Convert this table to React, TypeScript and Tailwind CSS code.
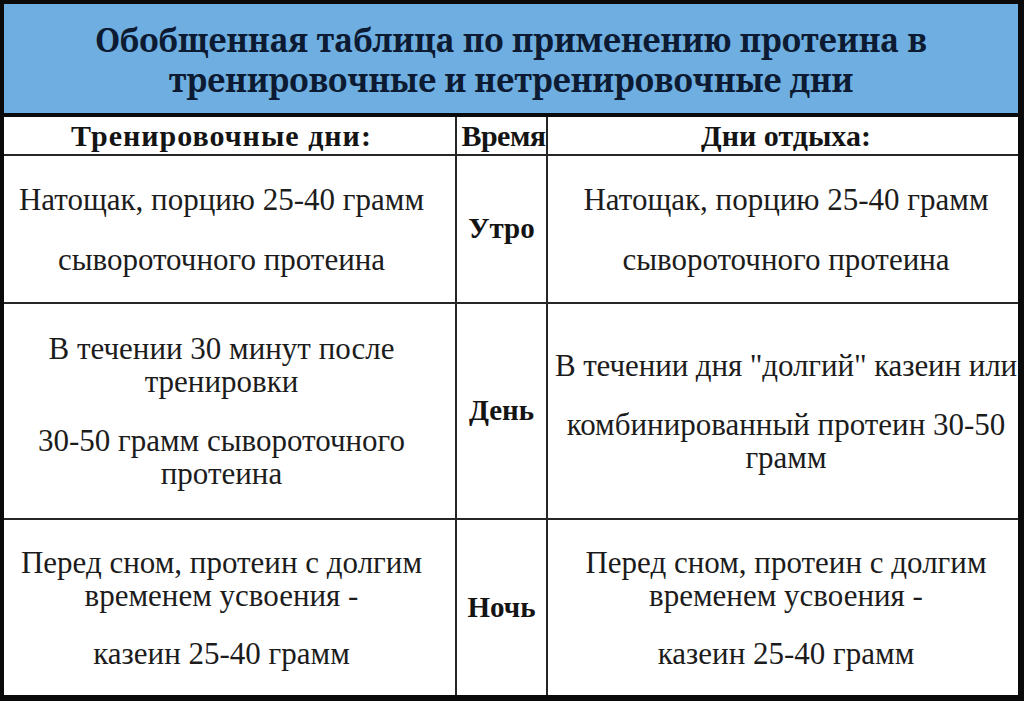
import React from "react";

const cellBody =
  "bg-white flex flex-col items-center justify-center text-center text-[31px] leading-[33px] whitespace-nowrap text-[#1c1c1c]";
const cellTime = "bg-white flex items-center justify-center font-bold text-[29px] text-[#141414]";
const cellHead =
  "bg-white flex items-center justify-center font-bold text-[30px] leading-[34px] whitespace-nowrap text-[#141414]";

export default function App() {
  return (
    <div className="w-[1024px] h-[701px] bg-[#0a0a0a] border-l-4 border-t-4 border-r-[6px] border-b-[6px] border-[#0a0a0a] flex flex-col overflow-hidden font-['Liberation_Serif']">
      <div className="h-[109px] bg-[#6eaee0] flex flex-col items-center justify-center text-[#0c1a32] font-bold text-[32px] leading-[40px] text-center pt-[2px] font-['Noto_Serif']">
        <div>Обобщенная таблица по применению протеина в</div>
        <div>тренировочные и нетренировочные дни</div>
      </div>
      <div className="h-[4px] bg-[#0a0a0a]" />
      <div className="flex-1 grid grid-cols-[451px_89px_470px] grid-rows-[37px_146px_214px_175px] gap-[2px] bg-[#262626]">
        <div className={cellHead + " pr-[16px] tracking-[1px]"}>Тренировочные дни:</div>
        <div className={cellHead + " tracking-[-0.5px] pl-[4px]"}>Время</div>
        <div className={cellHead + " pl-[6px]"}>Дни отдыха:</div>

        <div className={cellBody + " gap-[27px] pr-[16px]"}>
          <p>Натощак, порцию 25-40 грамм</p>
          <p>сывороточного протеина</p>
        </div>
        <div className={cellTime}>Утро</div>
        <div className={cellBody + " gap-[27px] pl-[6px]"}>
          <p>Натощак, порцию 25-40 грамм</p>
          <p>сывороточного протеина</p>
        </div>

        <div className={cellBody + " gap-[26px] pr-[16px]"}>
          <p>В течении 30 минут после<br />тренировки</p>
          <p>30-50 грамм сывороточного<br />протеина</p>
        </div>
        <div className={cellTime}>День</div>
        <div className={cellBody + " gap-[26px] pl-[6px]"}>
          <p className="tracking-[-0.1px]">В течении дня "долгий" казеин или</p>
          <p>комбинированный протеин 30-50<br />грамм</p>
        </div>

        <div className={cellBody + " gap-[25px] pr-[16px]"}>
          <p>Перед сном, протеин с долгим<br />временем усвоения -</p>
          <p>казеин 25-40 грамм</p>
        </div>
        <div className={cellTime}>Ночь</div>
        <div className={cellBody + " gap-[25px] pl-[6px]"}>
          <p>Перед сном, протеин с долгим<br />временем усвоения -</p>
          <p>казеин 25-40 грамм</p>
        </div>
      </div>
    </div>
  );
}
